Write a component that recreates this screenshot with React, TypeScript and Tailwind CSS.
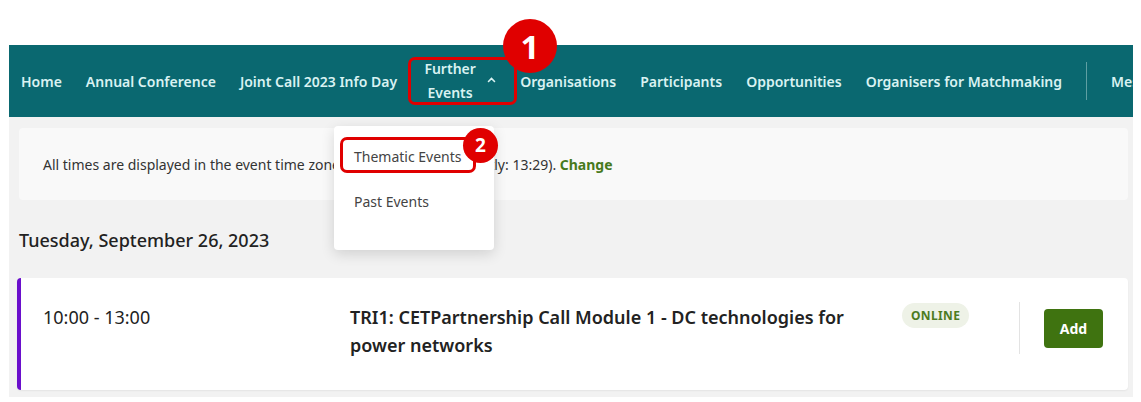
import React from 'react'

const navItems = ['Home', 'Annual Conference', 'Joint Call 2023 Info Day']
const navItemsAfter = ['Organisations', 'Participants', 'Opportunities', 'Organisers for Matchmaking']

function NavLink({ label }: { label: string }) {
  return (
    <a className="shrink-0 h-full flex items-center px-3 text-[14px] font-semibold text-[#d9f2f2] whitespace-nowrap">
      {label}
    </a>
  )
}

export default function App() {
  return (
    <div className="w-[1141px] h-[402px] bg-white overflow-hidden relative font-['Noto_Sans',sans-serif]">
      <div className="ml-[9px] mt-[45px] w-[1124px]">

        {/* Top navigation */}
        <nav className="h-[72px] bg-[#0a6870] relative">
          <div className="flex items-center h-full overflow-hidden w-full">
            {navItems.map((l) => <NavLink key={l} label={l} />)}

            {/* Further Events (open) */}
            <div className="shrink-0 relative h-full flex items-center px-3">
              <span className="w-[58px] text-center text-[14px] font-semibold leading-[24px] text-[#d9f2f2]">
                Further Events
              </span>
              <svg width="9" height="6" viewBox="0 0 9 6" className="ml-[8px] mt-[-2px]">
                <path d="M1.5 4.5 L4.5 1.5 L7.5 4.5" fill="none" stroke="#d9f2f2" strokeWidth="1.6" strokeLinecap="round" />
              </svg>
            </div>

            {navItemsAfter.map((l) => <NavLink key={l} label={l} />)}

            <div className="shrink-0 w-px h-[38px] bg-[#5f9fa3] ml-3 mr-3" />
            <NavLink label="Messages" />
          </div>

          {/* annotation 1 */}
          <div className="absolute left-[399px] top-[12px] w-[109px] h-[48px] border-[3px] border-[#e00000] rounded-[7px] pointer-events-none" />
          <div className="absolute left-[494px] top-[-26px] w-[54px] h-[54px] rounded-full bg-[#e00000] flex items-center justify-center text-white text-[33px] font-bold leading-none">
            1
          </div>
        </nav>

        {/* Content */}
        <main className="bg-[#f2f2f2] h-[280px] pl-[8px] pr-[4px] pt-[11px] relative">
          <div className="ml-[2px] w-[1109px] h-[72px] bg-[#f9f9f9] rounded-[4px] flex items-center px-6 text-[14px] text-[#333]">
            <span>
              All times are displayed in the event time zone (Europe/Berlin, currently: 13:29).{' '}
              <a className="font-bold text-[#477a1c]">Change</a>
            </span>
          </div>

          <h2 className="ml-[2px] mt-[28px] text-[18px] leading-[24px] font-medium text-[#222]">
            Tuesday, September 26, 2023
          </h2>

          {/* Event card */}
          <div className="mt-[26px] w-[1111px] h-[112px] bg-white rounded-[4px] border-l-[4px] border-[#6a0fcc] flex items-start pl-[22px] pr-[25px] pt-[25px] shadow-[0_1px_2px_rgba(0,0,0,0.06)]">
            <div className="w-[307px] text-[18px] leading-[28px] text-[#222]">10:00 - 13:00</div>
            <div className="w-[520px] text-[18px] leading-[28px] font-semibold text-[#222]">
              TRI1: CETPartnership Call Module 1 - DC technologies for power networks
            </div>
            <div className="ml-[32px] h-[25px] px-[9px] rounded-full bg-[#eef2e7] flex items-center text-[12px] font-bold tracking-[0.03em] text-[#4d7b1f]">
              ONLINE
            </div>
            <div className="ml-auto mt-[-1px] h-[52px] border-l border-[#e3e3e3] pl-[24px] flex items-center">
              <button className="w-[59px] h-[39px] rounded-[4px] bg-[#3f7310] text-white text-[14px] font-bold">
                Add
              </button>
            </div>
          </div>

          {/* Dropdown of Further Events */}
          <div className="absolute left-[325px] top-[9px] w-[160px] h-[124px] bg-white rounded-[4px] shadow-[0_4px_14px_rgba(0,0,0,0.14)] pt-[8px]">
            <div className="relative h-[45px] flex items-center pl-[20px] text-[14px] text-[#444]">
              Thematic Events
              <div className="absolute left-[6px] top-[3px] w-[136px] h-[36px] border-[3px] border-[#e00000] rounded-[7px]" />
              <div className="absolute left-[129px] top-[-6px] w-[35px] h-[35px] rounded-full bg-[#e00000] flex items-center justify-center text-white text-[19px] font-bold leading-none">
                2
              </div>
            </div>
            <div className="h-[45px] flex items-center pl-[20px] text-[14px] text-[#444]">Past Events</div>
          </div>
        </main>
      </div>
    </div>
  )
}
